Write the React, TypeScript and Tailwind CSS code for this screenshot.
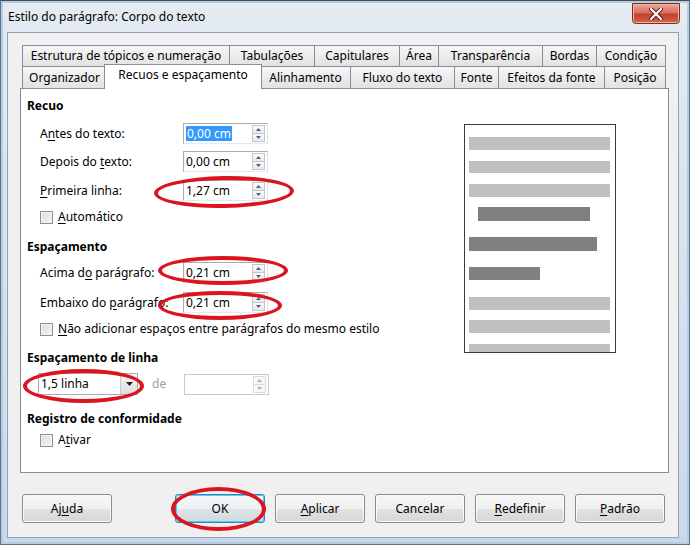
import React from "react";

const Arrow = ({ up, color = "#4d6185" }: { up?: boolean; color?: string }) => (
  <svg width="5" height="3" viewBox="0 0 5 3">
    {up ? <polygon points="0,3 5,3 2.5,0" fill={color} /> : <polygon points="0,0 5,0 2.5,3" fill={color} />}
  </svg>
);

function SpinBox({ value, selected, disabled }: { value?: string; selected?: boolean; disabled?: boolean }) {
  return (
    <div
      className={
        disabled
          ? "flex h-[21px] w-[85px] border border-[#c6cad0] bg-white"
          : "flex h-[21px] w-[85px] border border-[#abadb3] border-b-[#e3e9ef] border-r-[#dbdfe6] bg-white"
      }
    >
      <div className="flex flex-1 items-center pl-[2px]">
        {value && (
          <span className={selected ? "bg-[#3399ff] px-[1px] leading-[15px] text-white" : "leading-[15px] text-black"}>
            {value}
          </span>
        )}
      </div>
      <div className="my-[1px] mr-[2px] flex w-[13px] flex-col">
        <div className={disabled ? "flex flex-1 items-center justify-center border border-[#dcdcdc] bg-[#f7f7f7]" : "flex flex-1 items-center justify-center border border-[#c3c6cc] bg-gradient-to-b from-[#fbfbfb] to-[#e8e8e8]"}>
          <Arrow up color={disabled ? "#b0b0b0" : "#4d6185"} />
        </div>
        <div className={disabled ? "-mt-px flex flex-1 items-center justify-center border border-[#dcdcdc] bg-[#f7f7f7]" : "-mt-px flex flex-1 items-center justify-center border border-[#c3c6cc] bg-gradient-to-b from-[#fbfbfb] to-[#e8e8e8]"}>
          <Arrow color={disabled ? "#b0b0b0" : "#4d6185"} />
        </div>
      </div>
    </div>
  );
}

const CheckBox = () => (
  <div className="h-[13px] w-[13px] border border-[#8e8f8f] bg-gradient-to-br from-[#dcdcdc] to-[#f6f6f6] shadow-[inset_0_0_0_1px_#f4f4f4]" />
);

const U = ({ children }: { children: React.ReactNode }) => <span className="underline underline-offset-2">{children}</span>;

const row1: [string, number][] = [
  ["Estrutura de tópicos e numeração", 207],
  ["Tabulações", 85],
  ["Capitulares", 85],
  ["Área", 39],
  ["Transparência", 104],
  ["Bordas", 54],
  ["Condição", 70],
];
const row2: [string, number][] = [
  ["Organizador", 84],
  ["Recuos e espaçamento", 154],
  ["Alinhamento", 90],
  ["Fluxo do texto", 104],
  ["Fonte", 44],
  ["Efeitos da fonte", 106],
  ["Posição", 62],
];

function Button({ children, focused }: { children: React.ReactNode; focused?: boolean }) {
  return (
    <div
      className={
        focused
          ? "flex h-[29px] w-[90px] items-center justify-center rounded-[3px] border border-[#3c7fb1] bg-[linear-gradient(to_bottom,#f4f8fb_0%,#eef2f5_50%,#dfe4e8_50%,#d2d7db_100%)] shadow-[inset_0_0_0_1px_#48d1f8]"
          : "flex h-[29px] w-[90px] items-center justify-center rounded-[3px] border border-[#8a8a8a] bg-[linear-gradient(to_bottom,#f6f6f6_0%,#efefef_50%,#e2e2e2_50%,#d6d6d6_100%)] shadow-[inset_0_0_0_1px_#fbfbfb]"
      }
    >
      {children}
    </div>
  );
}

export default function App() {
  return (
    <div className="relative flex h-[545px] w-[690px] flex-col overflow-hidden border border-[#5f7288] border-t-[#4a4a4a] bg-gradient-to-b from-[#e4ebf2] to-[#c9d9ea] font-['Noto_Sans',sans-serif] text-[12px] text-black shadow-[inset_0_0_0_2px_#b4cde6]">
      {/* Title bar */}
      <div className="flex h-[31px] flex-none items-start">
        <span className="ml-[7px] mt-[8px] text-[12px] leading-[16px]">Estilo do parágrafo: Corpo do texto</span>
        <div className="ml-auto mr-[9px] mt-[2px] flex h-[21px] w-[48px] items-center justify-center rounded-b-[4px] border border-[#7d2a1f] bg-[linear-gradient(to_bottom,#e9a99b_0%,#d8705d_45%,#c4402c_55%,#d2654f_100%)] shadow-[inset_0_0_0_1px_#f0b5a8]">
          <svg width="14" height="12" viewBox="0 0 14 12">
            <path d="M2 1 L12 11 M12 1 L2 11" stroke="#5a1a12" strokeWidth="4" strokeLinecap="round" />
            <path d="M2 1 L12 11 M12 1 L2 11" stroke="#ffffff" strokeWidth="2.2" strokeLinecap="round" />
          </svg>
        </div>
      </div>

      {/* Client area */}
      <div className="mb-[6px] ml-[6px] mr-[10px] flex flex-1 flex-col border border-[#8fa3ba] bg-[#f0f0f0] pl-[12px] pr-[9px] pt-[12px]">
        {/* Tabs */}
        <div className="ml-[2px] flex h-[21px]">
          {row1.map(([t, w], i) => (
            <div
              key={t}
              style={{ width: w }}
              className={
                i === row1.length - 1
                  ? "flex flex-none items-center justify-center border border-b-0 border-[#898c95] bg-gradient-to-b from-[#f6f6f6] to-[#e2e2e2] leading-[14px]"
                  : "flex flex-none items-center justify-center border border-b-0 border-r-0 border-[#898c95] bg-gradient-to-b from-[#f6f6f6] to-[#e2e2e2] leading-[14px]"
              }
            >
              {t}
            </div>
          ))}
        </div>
        <div className="ml-[2px] flex h-[22px] items-end">
          {row2.map(([t, w], i) =>
            i === 1 ? (
              <div
                key={t}
                style={{ width: w + 4 }}
                className="relative z-10 -mx-[2px] -mb-px flex h-[25px] flex-none items-start justify-center border border-b-0 border-[#898c95] bg-white pt-[3px] leading-[14px]"
              >
                {t}
              </div>
            ) : (
              <div
                key={t}
                style={{ width: w }}
                className={
                  i === row2.length - 1
                    ? "flex h-[22px] flex-none items-center justify-center border border-b-0 border-[#898c95] bg-gradient-to-b from-[#f6f6f6] to-[#e2e2e2] leading-[14px]"
                    : "flex h-[22px] flex-none items-center justify-center border border-b-0 border-r-0 border-[#898c95] bg-gradient-to-b from-[#f6f6f6] to-[#e2e2e2] leading-[14px]"
                }
              >
                {t}
              </div>
            )
          )}
        </div>

        {/* Panel */}
        <div className="flex h-[385px] flex-none border border-[#898c95] bg-white">
          <div className="flex flex-1 flex-col pl-[6px]">
            <div className="mt-[9px] font-bold leading-[16px]">Recuo</div>
            <div className="mt-[9px] flex items-center pl-[13px]">
              <span className="w-[143px]">A<U>n</U>tes do texto:</span>
              <SpinBox value="0,00 cm" selected />
            </div>
            <div className="mt-[7px] flex items-center pl-[13px]">
              <span className="w-[143px]">Depois do <U>t</U>exto:</span>
              <SpinBox value="0,00 cm" />
            </div>
            <div className="mt-[8px] flex items-center pl-[13px]">
              <span className="w-[143px]"><U>P</U>rimeira linha:</span>
              <SpinBox value="1,27 cm" />
            </div>
            <div className="mt-[8px] flex h-[16px] items-center gap-[5px] pl-[13px]">
              <CheckBox />
              <span><U>A</U>utomático</span>
            </div>

            <div className="mt-[14px] font-bold leading-[16px]">Espaçamento</div>
            <div className="mt-[7px] flex items-center pl-[13px]">
              <span className="w-[143px]">Acima d<U>o</U> parágrafo:</span>
              <SpinBox value="0,21 cm" />
            </div>
            <div className="mt-[9px] flex items-center pl-[13px]">
              <span className="w-[143px]">Embaixo do <U>p</U>arágrafo:</span>
              <SpinBox value="0,21 cm" />
            </div>
            <div className="mt-[8px] flex h-[16px] items-center gap-[5px] pl-[13px]">
              <CheckBox />
              <span><U>N</U>ão adicionar espaços entre parágrafos do mesmo estilo</span>
            </div>

            <div className="mt-[13px] font-bold leading-[16px]">Espaçamento de linha</div>
            <div className="mt-[7px] flex items-center pl-[11px]">
              <div className="flex h-[22px] w-[100px] border border-[#abadb3] bg-white">
                <div className="flex flex-1 items-center pl-[2px]">1,5 linha</div>
                <div className="flex w-[17px] items-center justify-center border-l border-[#c9c9c9] bg-gradient-to-b from-[#f4f4f4] to-[#dedede]">
                  <svg width="7" height="4" viewBox="0 0 7 4"><polygon points="0,0 7,0 3.5,4" fill="#222" /></svg>
                </div>
              </div>
              <span className="ml-[14px] w-[32px] text-[#a0a0a0]">de</span>
              <SpinBox disabled />
            </div>

            <div className="mt-[16px] font-bold leading-[16px]">Registro de conformidade</div>
            <div className="mt-[5px] flex h-[16px] items-center gap-[5px] pl-[13px]">
              <CheckBox />
              <span>A<U>t</U>ivar</span>
            </div>
          </div>

          {/* Preview */}
          <div className="mr-[52px] mt-[35px] flex h-[229px] w-[152px] flex-none flex-col overflow-hidden border border-[#3a3a3a] bg-white px-[4px] pt-[12px]">
            <div className="h-[13px] w-[141px] flex-none bg-[#c0c0c0]" />
            <div className="mt-[11px] h-[12px] w-[141px] flex-none bg-[#c0c0c0]" />
            <div className="mt-[11px] h-[13px] w-[141px] flex-none bg-[#c0c0c0]" />
            <div className="ml-[9px] mt-[10px] h-[14px] w-[112px] flex-none bg-[#808080]" />
            <div className="mt-[16px] h-[14px] w-[128px] flex-none bg-[#808080]" />
            <div className="mt-[16px] h-[13px] w-[71px] flex-none bg-[#808080]" />
            <div className="mt-[17px] h-[13px] w-[141px] flex-none bg-[#c0c0c0]" />
            <div className="mt-[10px] h-[13px] w-[141px] flex-none bg-[#c0c0c0]" />
            <div className="mt-[11px] h-[13px] w-[141px] flex-none bg-[#c0c0c0]" />
          </div>
        </div>

        {/* Buttons */}
        <div className="ml-[2px] mt-[21px] flex">
          <Button>Aj<U>u</U>da</Button>
          <div className="ml-[63px] flex gap-[10px]">
            <Button focused>OK</Button>
            <Button><U>A</U>plicar</Button>
            <Button>Cancelar</Button>
            <Button><U>R</U>edefinir</Button>
            <Button><U>P</U>adrão</Button>
          </div>
        </div>
      </div>

      {/* Red annotation ellipses */}
      <div className="pointer-events-none absolute left-[153px] top-[175px] h-[32px] w-[140px] -rotate-1 rounded-[50%] border-[4px] border-[#dc1420]" />
      <div className="pointer-events-none absolute left-[157px] top-[255px] h-[29px] w-[130px] rounded-[50%] border-[4px] border-[#dc1420]" />
      <div className="pointer-events-none absolute left-[157px] top-[290px] h-[29px] w-[124px] rounded-[50%] border-[4px] border-[#dc1420]" />
      <div className="pointer-events-none absolute left-[22px] top-[368px] h-[34px] w-[121px] rounded-[50%] border-[4px] border-[#dc1420]" />
      <div className="pointer-events-none absolute left-[170px] top-[486px] h-[44px] w-[95px] rounded-[50%] border-[4px] border-[#dc1420]" />
    </div>
  );
}
